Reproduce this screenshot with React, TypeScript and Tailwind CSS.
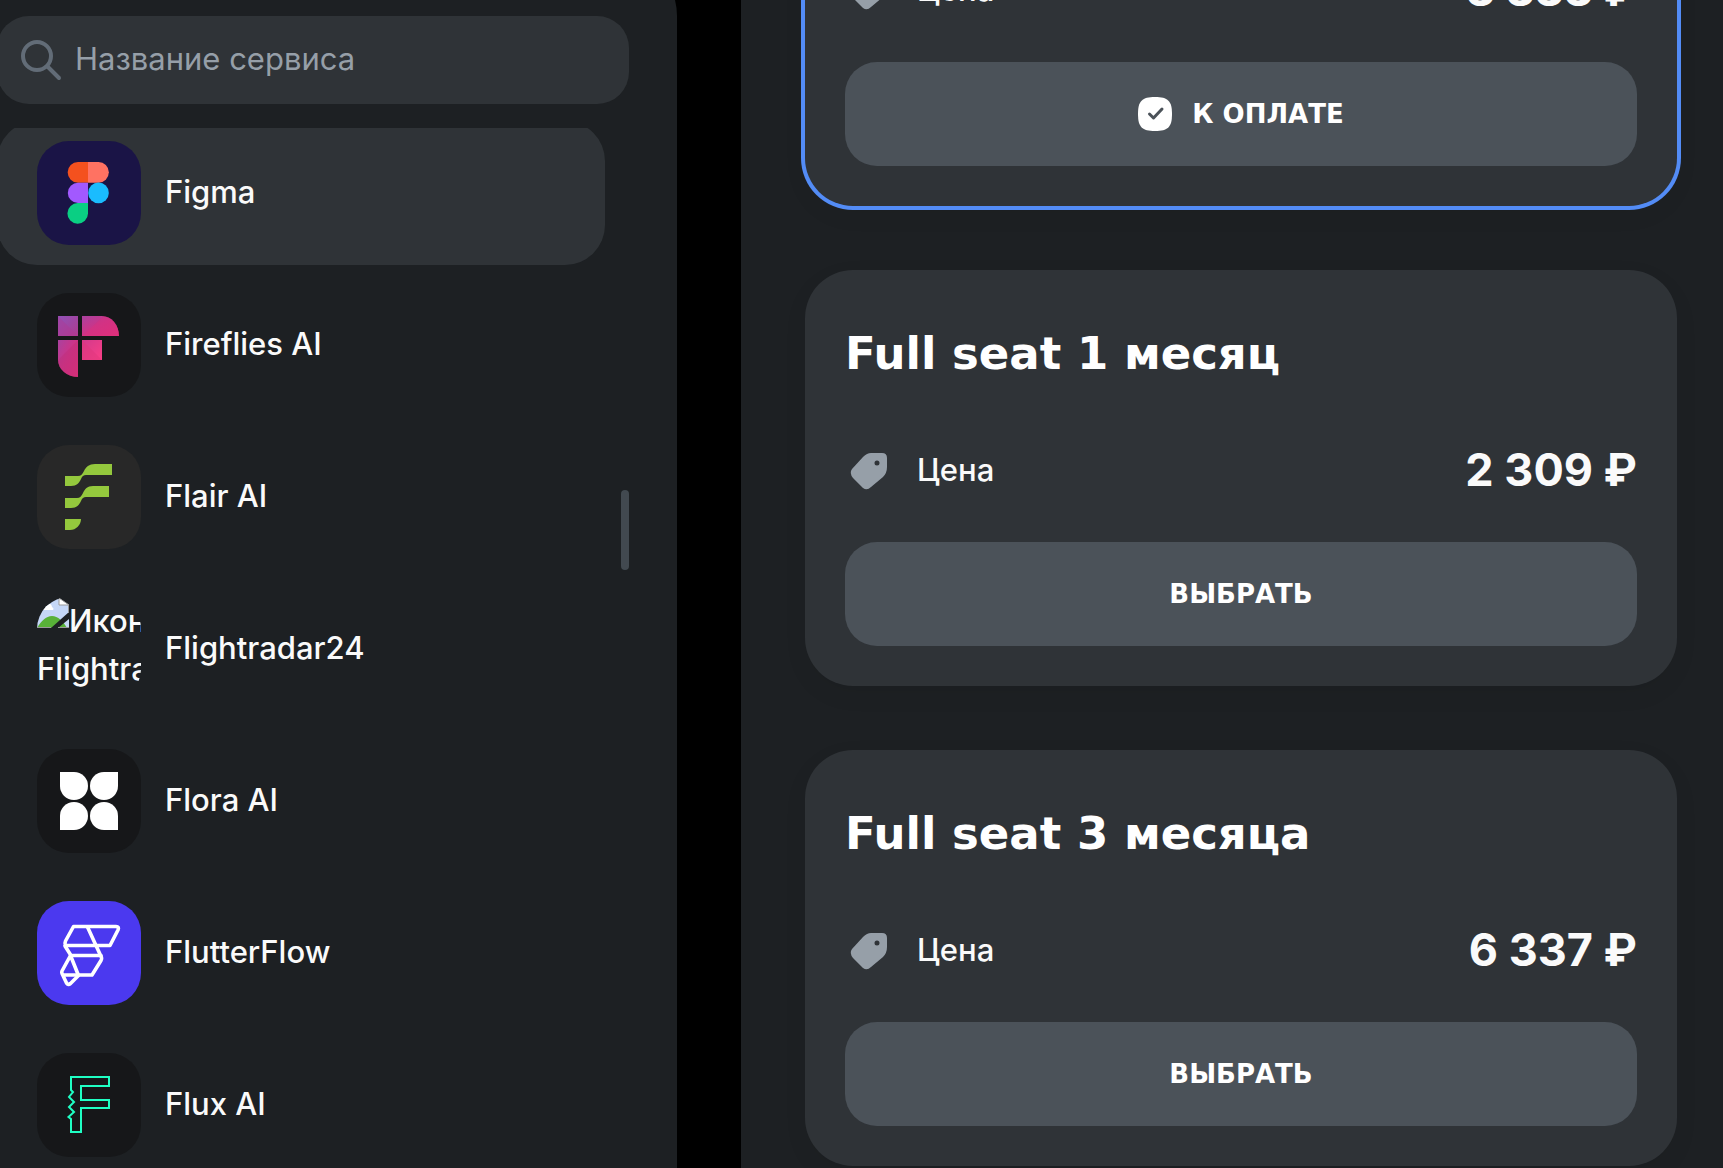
import type { ReactNode } from "react";

interface Service {
  name: string;
  tile: string;
  logo: ReactNode;
  selected?: boolean;
}

interface Plan {
  title?: string;
  price: string;
  selected?: boolean;
}

function FigmaLogo() {
  return (
    <svg viewBox="0 0 104 104" className="size-full" aria-hidden="true">
      <path d="M51 21H41a10.3 10.3 0 0 0 0 20.7h10z" fill="#f4511e" />
      <path d="M51 21h10.5a10.3 10.3 0 0 1 0 20.7H51z" fill="#ff7262" />
      <path d="M51 41.7H41a10.2 10.2 0 0 0 0 20.4h10z" fill="#a259ff" />
      <circle cx="61.5" cy="51.9" r="10.3" fill="#1abcfe" />
      <path d="M51 62.1H41A10.3 10.3 0 1 0 51 72.5z" fill="#0acf83" />
    </svg>
  );
}

function FirefliesLogo() {
  return (
    <svg viewBox="0 0 104 104" className="size-full" aria-hidden="true">
      <defs>
        <linearGradient id="ff-a" x1="0" y1="0" x2="1" y2="1">
          <stop offset="0" stopColor="#8f52b8" />
          <stop offset="1" stopColor="#b03a8e" />
        </linearGradient>
        <linearGradient id="ff-b" x1="0" y1="0" x2="1" y2="1">
          <stop offset="0" stopColor="#a9429f" />
          <stop offset="0.45" stopColor="#cc3488" />
          <stop offset="1" stopColor="#e0307a" />
        </linearGradient>
        <linearGradient id="ff-c" x1="0" y1="0" x2="1" y2="1">
          <stop offset="0" stopColor="#d23a8c" />
          <stop offset="1" stopColor="#fa3f86" />
        </linearGradient>
      </defs>
      <path d="M21 23h20v20H21z" fill="url(#ff-a)" />
      <path d="M21 23l20 20H21z" fill="#b13792" fillOpacity="0.4" />
      <path d="M45 23h20a17 20 0 0 1 17 20H45z" fill="url(#ff-b)" />
      <path d="M45 43l22-20h-2a17 20 0 0 1 17 20z" fill="#e0307a" fillOpacity="0.3" />
      <path d="M21 47h20v37a20 17 0 0 1-20-17z" fill="url(#ff-b)" />
      <path d="M21 67l20-20v37a20 17 0 0 1-20-17z" fill="#b82c70" fillOpacity="0.3" />
      <path d="M45 47h20v20H45z" fill="url(#ff-c)" />
      <path d="M45 47l20 20H45z" fill="#e0357c" fillOpacity="0.5" />
    </svg>
  );
}

function FlairLogo() {
  return (
    <svg viewBox="0 0 104 104" className="size-full" aria-hidden="true" fill="#94c83d">
      <path d="M75 19H58c-6 0-9 3-11 7-1.5 3-3 5-6 5H28v10h6c6 0 8-3 10-7 1-2.5 2.5-4 5-4h26z" />
      <path d="M72 41H56c-6 0-8 3-10 7-1.5 3-3 5-6 5H28v10h6c6 0 8-3 10-7 1-2.5 2.5-4 5-4h23z" />
      <path d="M28 74h16c0 6-5 11-11 11h-5z" />
    </svg>
  );
}

function FloraLogo() {
  return (
    <svg viewBox="0 0 104 104" className="size-full" aria-hidden="true" fill="#fff">
      <path d="M23 23h14a14 14 0 1 1-14 14z" />
      <path d="M81 23v14a14 14 0 1 1-14-14z" />
      <path d="M23 81V67a14 14 0 1 1 14 14z" />
      <path d="M81 81H67a14 14 0 1 1 14-14z" />
    </svg>
  );
}

function FlutterFlowLogo() {
  return (
    <svg viewBox="0 0 104 104" className="size-full" aria-hidden="true">
      <g fill="none" stroke="#fff" strokeWidth="3.6" strokeLinejoin="round" strokeLinecap="round">
        <path d="M36.5 25.5H79q3.5 0 2 3.5L73 44.5H28.5q-1-2.5 0-4.5z" />
        <path d="M50.5 26l14 30.5q.5 1.500-.5 3L55 74H27" />
        <path d="M28 45l6 9.5h30" />
        <path d="M33.5 54.5L25 70q-.5 1 0 2.5l4.5 9.5q1.5 2.5 4 .5l8-8z" />
      </g>
    </svg>
  );
}

function FluxLogo() {
  return (
    <svg viewBox="0 0 104 104" className="size-full" aria-hidden="true">
      <path
        d="M34 37V24h38v9H44v14h28v8H44v24H34V66l-2.5-2L37 59l-5-5 5-5-5-5 4-5z"
        fill="none"
        stroke="#1fffc4"
        strokeWidth="2"
      />
    </svg>
  );
}

// Missing picture with its alternative text, clipped by the tile
function BrokenLogo() {
  return (
    <span className="block text-[31px] leading-12 font-medium">
      <span className="flex whitespace-nowrap">
        <svg viewBox="0 0 32 32" className="size-8 shrink-0" aria-hidden="true">
          <path d="M0 1h22l10 8v22H0z" fill="#c5d7f7" />
          <path d="M4 12c0-3 3-3 4-5 3-2 7 0 7 3 2 1 2 3 0 3H4z" fill="#fff" />
          <path d="M0 31c4-7 9-12 15-12s11 5 15 12z" fill="#58b138" />
          <path d="M14 31L32 15v7L21 31z" fill="#1d2023" />
          <path d="M22 1v7h10z" fill="#fff" stroke="#9a9a9a" />
          <path d="M0 30.5h14M21 30.5h11M31.5 8v8" stroke="#9a9a9a" />
        </svg>
        Иконка
      </span>
      <span className="block overflow-hidden">Flightradar24</span>
    </span>
  );
}

function SearchIcon() {
  return (
    <svg viewBox="0 0 48 48" className="size-12 shrink-0" fill="none" stroke="#626c77" strokeWidth="4" strokeLinecap="round" aria-hidden="true">
      <circle cx="20" cy="20" r="14" />
      <path d="M31 31l11 11" />
    </svg>
  );
}

function TagIcon() {
  return (
    <svg viewBox="0 0 48 48" className="size-12 shrink-0" aria-hidden="true">
      <path
        fillRule="evenodd"
        fill="#969fa8"
        d="M26 7h11q5 0 5 5v9q0 6-4 10L26 41q-4 4-8 1L8 32q-4-5-1-9L18 11q4-4 8-4zm6 7.5a2.5 2.5 0 1 0 0 5 2.5 2.5 0 0 0 0-5z"
      />
    </svg>
  );
}

function CheckIcon() {
  return (
    <svg viewBox="0 0 34 34" className="size-[34px] shrink-0" aria-hidden="true">
      <path d="M17 0c13 0 17 4 17 17s-4 17-17 17S0 30 0 17 4 0 17 0z" fill="#fff" />
      <path d="M11.5 17l4 4 8.5-9" fill="none" stroke="#4b5259" strokeWidth="3" strokeLinecap="round" strokeLinejoin="round" />
    </svg>
  );
}

const services: Service[] = [
  { name: "Figma", tile: "bg-[#1a1446]", logo: <FigmaLogo />, selected: true },
  { name: "Fireflies AI", tile: "bg-[#161719]", logo: <FirefliesLogo /> },
  { name: "Flair AI", tile: "bg-[#282828]", logo: <FlairLogo /> },
  { name: "Flightradar24", tile: "", logo: <BrokenLogo /> },
  { name: "Flora AI", tile: "bg-[#161719]", logo: <FloraLogo /> },
  { name: "FlutterFlow", tile: "bg-[#4b39ef]", logo: <FlutterFlowLogo /> },
  { name: "Flux AI", tile: "bg-[#161719]", logo: <FluxLogo /> },
];

const plans: Plan[] = [
  { price: "3 333 ₽", selected: true },
  { title: "Full seat 1 месяц", price: "2 309 ₽" },
  { title: "Full seat 3 месяца", price: "6 337 ₽" },
];

function ServiceRow({ name, tile, logo, selected }: Service) {
  return (
    <li>
      <button
        type="button"
        className={`flex w-full items-center gap-6 rounded-[40px] px-10 py-5 text-left ${selected ? "bg-[#2f3337]" : ""}`}
      >
        <span className={`size-[104px] shrink-0 overflow-hidden rounded-[32px] ${tile}`}>{logo}</span>
        <span className="pb-0.5 text-[31px] leading-12 font-medium">{name}</span>
      </button>
    </li>
  );
}

function PlanCard({ title, price, selected }: Plan) {
  return (
    <section
      className={`rounded-[48px] bg-[#2f3337] p-10 ${
        selected ? "shadow-[0_0_0_4px_#538cf6,0_8px_24px_#0000000f]" : "shadow-[0_8px_24px_#0000000f]"
      }`}
    >
      {title && (
        <h2 className="mt-3 mb-15 font-['DejaVu_Sans',sans-serif] text-[45px] leading-16 font-bold text-white">
          {title}
        </h2>
      )}
      <div className="flex h-12 items-center gap-6">
        <TagIcon />
        <span className="text-[31px] leading-12 font-medium">Цена</span>
        <span className="ml-auto text-[45px] leading-12 font-bold">{price}</span>
      </div>
      <button
        type="button"
        className="mt-12 flex h-[104px] w-full items-center justify-center gap-5 rounded-[32px] bg-[#4b5259] font-['DejaVu_Sans',sans-serif] text-[26px] font-bold text-white uppercase"
      >
        {selected && <CheckIcon />}
        {selected ? "К оплате" : "Выбрать"}
      </button>
    </section>
  );
}

export default function App() {
  return (
    <div className="h-screen overflow-hidden bg-black font-['Inter',sans-serif] text-[#fafafa]">
      <main className="-mr-[18px] -ml-[51px] grid h-full grid-cols-[728fr_1000fr] gap-16">
        <aside className="-mt-12 flex min-h-0 flex-col gap-6 rounded-tr-[64px] bg-[#1d2023] px-12 pt-16">
          <label className="flex h-[88px] shrink-0 items-center gap-2 rounded-[32px] bg-[#2f3337] px-5">
            <SearchIcon />
            <input
              type="text"
              aria-label="Название сервиса"
              placeholder="Название сервиса"
              className="min-w-0 flex-1 bg-transparent pb-0.5 pl-0.5 text-[31px] leading-12 outline-none placeholder:text-[#969fa8]"
            />
          </label>
          <div className="flex min-h-0 flex-1 gap-4 overflow-hidden">
            <ul className="-mt-[7px] flex flex-1 flex-col gap-2">
              {services.map((service) => (
                <ServiceRow key={service.name} {...service} />
              ))}
            </ul>
            <div className="mt-[362px] h-20 w-2 rounded-full bg-[#424950]" />
          </div>
        </aside>

        <div className="min-h-0 overflow-hidden bg-[#1d2023] px-16">
          <div className="-mt-[74px] flex flex-col gap-16">
            {plans.map((plan) => (
              <PlanCard key={plan.price} {...plan} />
            ))}
          </div>
        </div>
      </main>
    </div>
  );
}
